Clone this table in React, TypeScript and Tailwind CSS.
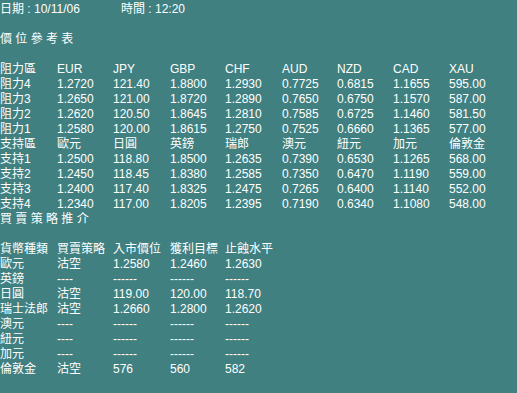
import React from "react";

const cols = "grid grid-cols-[57px_56px_57px_55px_57px_55px_56px_56px_68px]";

const ref: string[][] = [
  ["阻力區", "EUR", "JPY", "GBP", "CHF", "AUD", "NZD", "CAD", "XAU"],
  ["阻力4", "1.2720", "121.40", "1.8800", "1.2930", "0.7725", "0.6815", "1.1655", "595.00"],
  ["阻力3", "1.2650", "121.00", "1.8720", "1.2890", "0.7650", "0.6750", "1.1570", "587.00"],
  ["阻力2", "1.2620", "120.50", "1.8645", "1.2810", "0.7585", "0.6725", "1.1460", "581.50"],
  ["阻力1", "1.2580", "120.00", "1.8615", "1.2750", "0.7525", "0.6660", "1.1365", "577.00"],
  ["支持區", "歐元", "日圓", "英鎊", "瑞郎", "澳元", "紐元", "加元", "倫敦金"],
  ["支持1", "1.2500", "118.80", "1.8500", "1.2635", "0.7390", "0.6530", "1.1265", "568.00"],
  ["支持2", "1.2450", "118.45", "1.8380", "1.2585", "0.7350", "0.6470", "1.1190", "559.00"],
  ["支持3", "1.2400", "117.40", "1.8325", "1.2475", "0.7265", "0.6400", "1.1140", "552.00"],
  ["支持4", "1.2340", "117.00", "1.8205", "1.2395", "0.7190", "0.6340", "1.1080", "548.00"],
];

const strat: string[][] = [
  ["貨幣種類", "買賣策略", "入市價位", "獲利目標", "止蝕水平"],
  ["歐元", "沽空", "1.2580", "1.2460", "1.2630"],
  ["英鎊", "----", "------", "------", "------"],
  ["日圓", "沽空", "119.00", "120.00", "118.70"],
  ["瑞士法郎", "沽空", "1.2660", "1.2800", "1.2620"],
  ["澳元", "----", "------", "------", "------"],
  ["紐元", "----", "------", "------", "------"],
  ["加元", "----", "------", "------", "------"],
  ["倫敦金", "沽空", "576", "560", "582"],
];

export default function App() {
  return (
    <div
      className="w-[517px] h-[393px] bg-[#408080] text-white text-[12px] leading-[15px] pt-[2px] overflow-hidden"
      style={{ fontFamily: '"Liberation Sans", "Noto Sans CJK TC", sans-serif' }}
    >
      <div className="flex h-[15px] whitespace-pre">
        <div className="w-[121px]">日期 : 10/11/06</div>
        <div>時間 : 12:20</div>
      </div>
      <div className="h-[15px]" />
      <div className="h-[15px] whitespace-pre">價 位 參 考 表</div>
      <div className="h-[15px]" />
      {ref.map((row, i) => (
        <div key={i} className={`${cols} h-[15px] whitespace-nowrap`}>
          {row.map((c, j) => (
            <div key={j}>{c}</div>
          ))}
        </div>
      ))}
      <div className="h-[15px] whitespace-pre">買 賣 策 略 推 介</div>
      <div className="h-[15px]" />
      {strat.map((row, i) => (
        <div key={i} className={`${cols} h-[15px] whitespace-nowrap`}>
          {row.map((c, j) => (
            <div key={j}>{c}</div>
          ))}
        </div>
      ))}
    </div>
  );
}
